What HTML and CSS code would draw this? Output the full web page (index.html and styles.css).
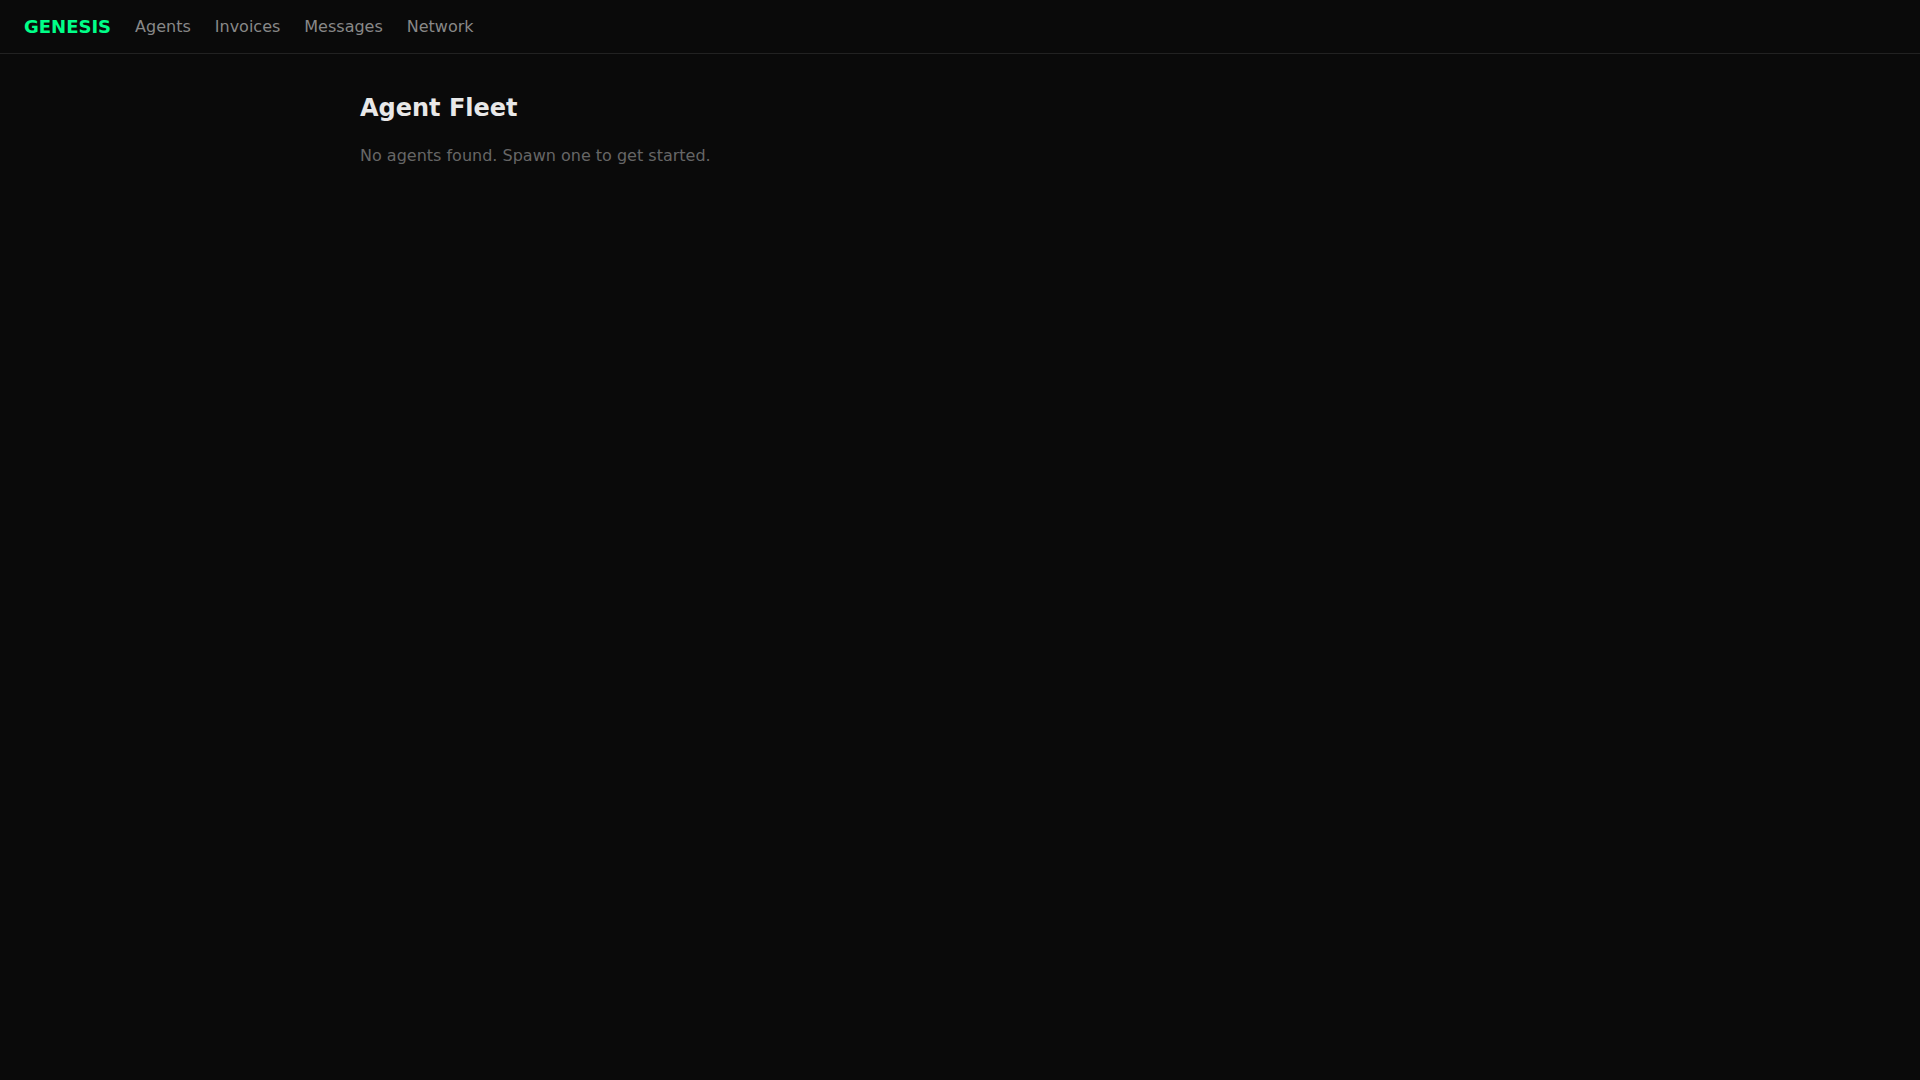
FILE: index.html
```html
<!DOCTYPE html>
<html lang="en">
<head>
<meta charset="utf-8">
<title>Genesis</title>
<link rel="stylesheet" href="styles.css">
</head>
<body>
<header class="topbar">
  <a class="logo" href="#">GENESIS</a>
  <nav class="nav">
    <a href="#">Agents</a>
    <a href="#">Invoices</a>
    <a href="#">Messages</a>
    <a href="#">Network</a>
  </nav>
</header>
<main class="content">
  <h1 class="title">Agent Fleet</h1>
  <p class="empty">No agents found. Spawn one to get started.</p>
</main>
</body>
</html>
```
FILE: styles.css
```css
* { box-sizing: border-box; }
html, body { margin: 0; padding: 0; }
body {
  background: #0a0a0a;
  color: #e5e5e5;
  font-family: "DejaVu Sans", sans-serif;
  min-height: 100vh;
}
a { text-decoration: none; }
.topbar {
  display: flex;
  align-items: center;
  gap: 24px;
  height: 54px;
  padding: 0 24px;
  border-bottom: 1px solid #222;
}
.logo {
  color: #00ff88;
  font-weight: bold;
  font-size: 18px;
}
.nav { display: flex; gap: 24px; }
.nav a { color: #888; font-size: 16px; }
.content {
  max-width: 1200px;
  margin: 0 auto;
  padding: 40px 0;
}
.title {
  margin: 0;
  font-size: 24px;
  font-weight: bold;
  color: #e8e8e8;
}
.empty {
  margin: 24px 0 0;
  font-size: 16px;
  color: #666;
}
```
